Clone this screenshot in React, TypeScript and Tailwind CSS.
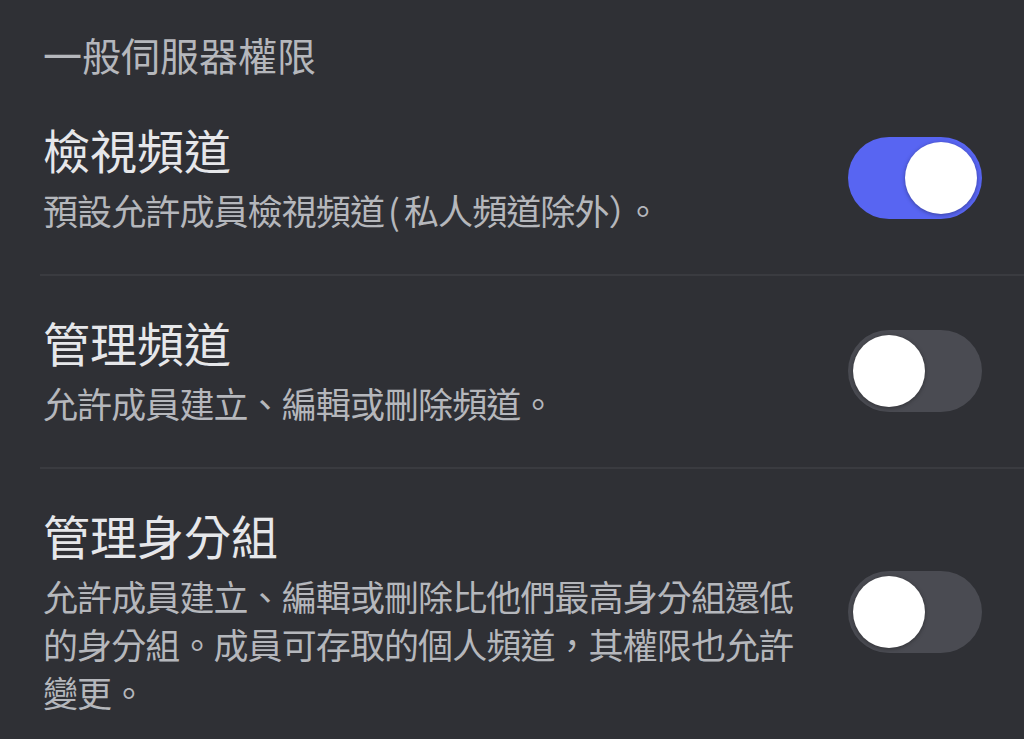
import { useState } from "react"

type Perm = { id: string; title: string; desc: React.ReactNode; on: boolean }

const perms: Perm[] = [
  {
    id: "view",
    title: "檢視頻道",
    desc: (
      <>
        預設允許成員檢視頻道<span className="pl-[4px] pr-[5px]">(</span>私人頻道除外）。
      </>
    ),
    on: true,
  },
  { id: "manage-channels", title: "管理頻道", desc: "允許成員建立、編輯或刪除頻道。", on: false },
  {
    id: "manage-roles",
    title: "管理身分組",
    desc: "允許成員建立、編輯或刪除比他們最高身分組還低的身分組。成員可存取的個人頻道，其權限也允許變更。",
    on: false,
  },
]

function Toggle({ on, onChange }: { on: boolean; onChange: () => void }) {
  return (
    <button
      onClick={onChange}
      className={`flex h-[82px] w-[134px] shrink-0 items-center rounded-full p-[5px] ${
        on ? "justify-end bg-[#5865f2]" : "justify-start bg-[#4a4b52]"
      }`}
    >
      <span className="block h-[72px] w-[72px] rounded-full bg-white shadow-[0_1px_4px_rgba(0,0,0,0.35)]" />
    </button>
  )
}

export default function App() {
  const [state, setState] = useState<Record<string, boolean>>(
    Object.fromEntries(perms.map((p) => [p.id, p.on]))
  )

  return (
    <div
      className="min-h-[739px] w-full overflow-hidden bg-[#2f3035] pt-[30px]"
      style={{ fontFamily: '"Noto Sans CJK TC", "Noto Sans", sans-serif' }}
    >
      <h2 className="mb-[5px] pl-[43px] text-[39px] leading-[48px] font-normal text-[#b5b7bc]">
        一般伺服器權限
      </h2>
      <div className="pl-[40px]">
        {perms.map((p, i) => (
          <div
            key={p.id}
            className={`flex items-center justify-between pt-[38px] pr-[42px] pb-[40px] ${
              i < perms.length - 1 ? "border-b-2 border-[#3a3b40]" : ""
            }`}
          >
            <div className="w-[770px] pl-[3px]">
              <div className="text-[47px] leading-[56px] text-[#e6e7ea]">{p.title}</div>
              <div className="mt-[9px] text-[35px] leading-[48px] tracking-[-0.9px] text-[#b5b7bc]">
                {p.desc}
              </div>
            </div>
            <Toggle on={state[p.id]} onChange={() => setState((s) => ({ ...s, [p.id]: !s[p.id] }))} />
          </div>
        ))}
      </div>
    </div>
  )
}
